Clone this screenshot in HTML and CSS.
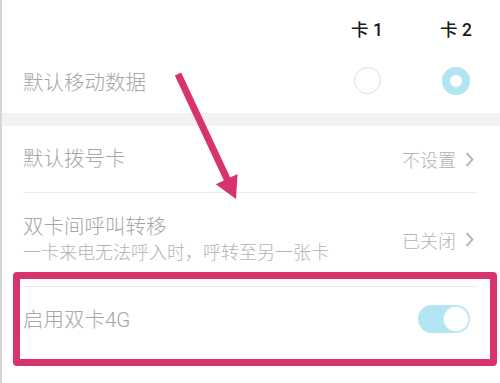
FILE: index.html
```html
<!DOCTYPE html>
<html lang="zh">
<head>
<meta charset="utf-8">
<link rel="stylesheet" href="styles.css">
</head>
<body>
<div class="screen">
  <div class="sim-header">
    <span class="sim-col">卡 1</span>
    <span class="sim-col">卡 2</span>
  </div>
  <div class="row data-row">
    <span class="title">默认移动数据</span>
    <div class="radios">
      <span class="sim-col"><span class="radio"></span></span>
      <span class="sim-col"><span class="radio checked"></span></span>
    </div>
  </div>
  <div class="band"></div>
  <div class="list">
    <div class="row item">
      <span class="title">默认拨号卡</span>
      <span class="value">不设置<svg class="chev" viewBox="0 0 9 15"><polyline points="1.5,1 7.5,7.5 1.5,14"/></svg></span>
    </div>
    <div class="divider"></div>
    <div class="row item tall">
      <div class="texts">
        <span class="title">双卡间呼叫转移</span>
        <span class="sub">一卡来电无法呼入时，呼转至另一张卡</span>
      </div>
      <span class="value">已关闭<svg class="chev" viewBox="0 0 9 15"><polyline points="1.5,1 7.5,7.5 1.5,14"/></svg></span>
    </div>
    <div class="divider"></div>
    <div class="row item">
      <span class="title">启用双卡4G</span>
      <span class="toggle"><span class="knob"></span></span>
    </div>
  </div>
  <div class="highlight"></div>
  <svg class="arrow" viewBox="0 0 500 383" width="500" height="383">
    <line x1="178" y1="74" x2="228" y2="181" />
    <polygon points="237.6,174 215.8,184.2 236,199" />
  </svg>
</div>
</body>
</html>
```

FILE: styles.css
```css
html, body {
  margin: 0;
  padding: 0;
  background: #ffffff;
}
.screen {
  position: relative;
  width: 500px;
  height: 383px;
  overflow: hidden;
  box-sizing: border-box;
  border-left: 2px solid #d6d6d6;
  background: #ffffff;
  font-family: "Roboto", "Noto Sans CJK SC", "Noto Sans", sans-serif;
  font-weight: 300;
}
.sim-header {
  display: flex;
  justify-content: flex-end;
  gap: 29px;
  padding: 20px 14px 10px 0;
  height: 20px;
}
.sim-col {
  width: 60px;
  display: flex;
  justify-content: center;
  align-items: center;
  font-size: 17.5px;
  line-height: 20px;
  color: #1a1a1a;
  font-weight: 500;
}
.row {
  display: flex;
  align-items: center;
  justify-content: space-between;
}
.data-row {
  height: 63px;
  padding-left: 21px;
  padding-right: 14px;
}
.data-row .title {
  position: relative;
  top: 1px;
}
.radios {
  display: flex;
  gap: 29px;
}
.radio {
  width: 25px;
  height: 25px;
  border-radius: 50%;
  border: 1px solid #dcdcdc;
  position: relative;
  top: -1px;
}
.radio.checked {
  width: 12px;
  height: 12px;
  border: 8px solid #b2e4f1;
}
.title {
  font-size: 20.5px;
  line-height: 24px;
  color: #a6a6a6;
}
.band {
  height: 13px;
  background: #f2f2f2;
}
.list {
  padding: 0 22px 0 21px;
}
.item {
  height: 66px;
}
.item.tall {
  height: 93px;
}
.texts {
  display: flex;
  flex-direction: column;
  gap: 2px;
}
.sub {
  font-size: 18px;
  line-height: 24px;
  color: #b3b3b3;
}
.value {
  display: flex;
  align-items: center;
  gap: 9px;
  font-size: 18px;
  color: #b3b3b3;
  margin-right: 4px;
}
.chev {
  width: 9px;
  height: 15px;
  fill: none;
  stroke: #b8b8b8;
  stroke-width: 2;
}
.divider {
  height: 1px;
  background: #ebebeb;
}
.toggle {
  width: 52px;
  height: 28px;
  border-radius: 14px;
  background: #b3e5f2;
  display: flex;
  align-items: center;
  justify-content: flex-end;
  padding-right: 1px;
  box-sizing: border-box;
  margin-right: 8px;
  position: relative;
  top: -1px;
}
.knob {
  width: 24px;
  height: 24px;
  border-radius: 50%;
  background: #ffffff;
  border: 1px solid #d8eef5;
}
.highlight {
  position: absolute;
  left: 11px;
  top: 272px;
  width: 470px;
  height: 80px;
  border: 7px solid #d6336f;
  border-radius: 4px;
}
.arrow {
  position: absolute;
  left: -2px;
  top: 0;
}
.arrow line {
  stroke: #d6336f;
  stroke-width: 7;
}
.arrow polygon {
  fill: #d6336f;
}
```
